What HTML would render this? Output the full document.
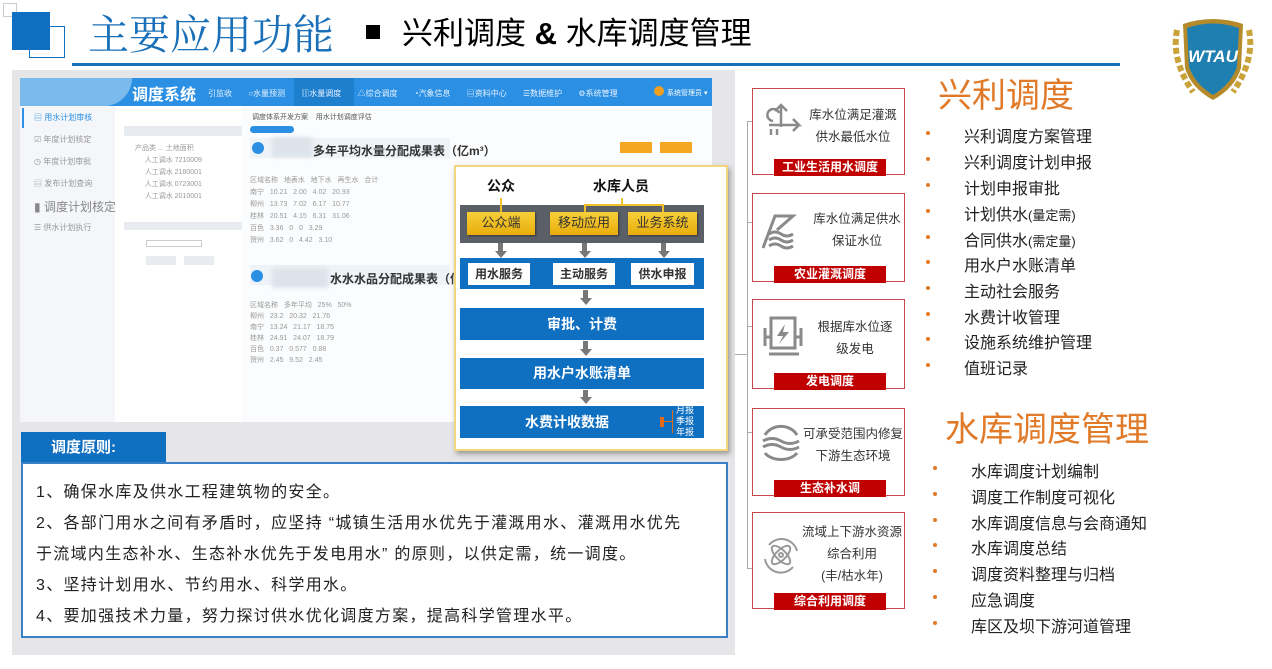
<!DOCTYPE html>
<html><head><meta charset="utf-8">
<style>
*{margin:0;padding:0;box-sizing:border-box}
body{width:1272px;height:669px;background:#fff;position:relative;overflow:hidden;font-family:"Liberation Sans","Noto Sans CJK SC",sans-serif}
.a{position:absolute}
.t{font-family:"Liberation Sans","Noto Sans CJK SC",sans-serif;white-space:nowrap}
.small{font-size:7px;color:#999}
.card{position:absolute;left:752px;width:153px;border:1.5px solid #c9464c;background:#fff}
.card .lab{position:absolute;left:21px;width:112px;height:17px;background:#c00000;color:#fff;font-weight:bold;font-size:12px;text-align:center;line-height:17px;bottom:-2px}
.card .txt{position:absolute;font-size:12.5px;color:#333;text-align:center;line-height:22px}
.li{position:absolute;font-size:16px;color:#222;white-space:nowrap}
.bu{position:absolute;width:4px;height:4px;border-radius:50%;background:#e07a28}
.fb{position:absolute;background:#0f6fc0;color:#fff;font-weight:bold;text-align:center}
.yb{position:absolute;background:linear-gradient(#f7cf3a,#e9ad0a);color:#333;font-size:13px;text-align:center;line-height:22px;box-shadow:1px 1px 2px #333}
.wb{position:absolute;background:#fff;color:#333;font-weight:bold;font-size:12px;text-align:center;line-height:22px}
.arr{position:absolute;width:0;height:0;border-left:6px solid transparent;border-right:6px solid transparent;border-top:7px solid #777}
.arrs{position:absolute;width:5px;background:#777}
</style></head><body>
<!-- title -->
<div class="a" style="left:3px;top:3px;width:14px;height:14px;border:1px solid #ccc"></div>
<div class="a" style="left:29px;top:26px;width:36px;height:32px;border:1px solid #0f6fc0;background:#fff"></div>
<div class="a" style="left:12px;top:12px;width:38px;height:38px;background:#0f6fc0"></div>
<div class="a t" style="left:88px;top:6px;font-size:41px;color:#1a70b8;line-height:52px;font-family:'Noto Serif CJK SC','Liberation Serif',serif">主要应用功能</div>
<div class="a" style="left:366px;top:25px;width:14px;height:14px;background:#000"></div>
<div class="a t" style="left:402px;top:13px;font-size:31px;color:#000;line-height:42px">兴利调度 <b>&amp;</b> 水库调度管理</div>
<div class="a" style="left:72px;top:63px;width:1048px;height:3px;background:#1a70b8"></div>
<!-- logo -->
<svg class="a" style="left:1165px;top:10px" width="96" height="96" viewBox="0 0 96 96">
<path d="M12 20 Q6 50 28 82 M84 20 Q90 50 68 82" stroke="#c9a23a" stroke-width="6" fill="none" stroke-dasharray="6 3"/>
<path d="M18 14 Q48 4 78 14 L76 58 Q70 78 48 90 Q26 78 20 58 Z" fill="#b58a2a"/>
<path d="M22 18 Q48 9 74 18 L72 57 Q66 74 48 85 Q30 74 24 57 Z" fill="#1f7fb0"/>
<text x="48" y="52" text-anchor="middle" font-size="17" font-weight="bold" font-style="italic" fill="#fff" font-family="Liberation Sans">WTAU</text>
</svg>
<!-- gray panel -->
<div class="a" style="left:12px;top:70px;width:723px;height:585px;background:#e6e6e8"></div>
<!-- screenshot -->
<div class="a" style="left:20px;top:78px;width:692px;height:344px;background:#fff"></div>
<div class="a" style="left:20px;top:78px;width:692px;height:28px;background:#2b8fe3"></div>
<div class="a" style="left:20px;top:78px;width:112px;height:28px;background:#8ec4ee;border-radius:0 0 30px 0;opacity:.8"></div>
<div class="a" style="left:294px;top:78px;width:60px;height:28px;background:#1f7fcf"></div>
<div class="a t" style="left:132px;top:81px;font-size:16px;color:#fff;font-weight:bold">调度系统</div>
<div class="a t" style="left:208px;top:88px;font-size:8px;color:#e6f2ff;word-spacing:14px">引监收 ○水量预测 ▥水量调度 △综合调度 ◔汽象信息 ▤资料中心 ☰数据维护 ⚙系统管理</div>
<div class="a" style="left:654px;top:86px;width:10px;height:10px;border-radius:50%;background:#f0a020"></div>
<div class="a t" style="left:667px;top:88px;font-size:7px;color:#fff">系统管理员 ▾</div>
<div class="a" style="left:20px;top:106px;width:95px;height:316px;background:#f4f6f9"></div>
<div class="a" style="left:22px;top:108px;width:2px;height:20px;background:#2b8fe3"></div>
<div class="a t" style="left:34px;top:112px;font-size:8px;color:#2b8fe3">▤ 用水计划审核</div>
<div class="a t" style="left:34px;top:134px;font-size:8px;color:#999">☑ 年度计划核定</div>
<div class="a t" style="left:34px;top:156px;font-size:8px;color:#999">◷ 年度计划审批</div>
<div class="a t" style="left:34px;top:178px;font-size:8px;color:#999">▤ 发布计划查询</div>
<div class="a t" style="left:34px;top:198px;font-size:12px;color:#888">▮ 调度计划核定</div>
<div class="a t" style="left:34px;top:222px;font-size:8px;color:#999">☰ 供水计划执行</div>
<div class="a" style="left:124px;top:126px;width:118px;height:10px;background:#e8ebef"></div>
<div class="a small" style="left:135px;top:143px;line-height:12px;width:100px">产品类 ... 土地面积<br>&nbsp;&nbsp;&nbsp;&nbsp;&nbsp;人工调水 7210009<br>&nbsp;&nbsp;&nbsp;&nbsp;&nbsp;人工调水 2180001<br>&nbsp;&nbsp;&nbsp;&nbsp;&nbsp;人工调水 0723001<br>&nbsp;&nbsp;&nbsp;&nbsp;&nbsp;人工调水 2010001</div>
<div class="a" style="left:124px;top:222px;width:118px;height:8px;background:#e8ebef"></div>
<div class="a" style="left:146px;top:240px;width:56px;height:7px;border:1px solid #ccc"></div>
<div class="a" style="left:146px;top:256px;width:30px;height:9px;background:#e8ebef"></div>
<div class="a" style="left:184px;top:256px;width:30px;height:9px;background:#e8ebef"></div>
<div class="a" style="left:242px;top:106px;width:470px;height:316px;background:#fbfcfd"></div>
<div class="a t" style="left:252px;top:112px;font-size:7px;color:#555">调度体系开发方案 &nbsp;&nbsp;&nbsp;用水计划调度评估</div>
<div class="a" style="left:250px;top:126px;width:44px;height:7px;border-radius:4px;background:#2b8fe3"></div>
<div class="a" style="left:250px;top:138px;width:200px;height:20px;background:#eef3f8"></div>
<div class="a" style="left:252px;top:142px;width:12px;height:12px;border-radius:50%;background:#2b8fe3"></div>
<div class="a" style="left:272px;top:137px;width:40px;height:20px;background:#dde3ea;filter:blur(2px)"></div>
<div class="a t" style="left:313px;top:142px;font-size:12px;color:#333;font-weight:bold">多年平均水量分配成果表（亿m³）</div>
<div class="a" style="left:620px;top:142px;width:32px;height:11px;background:#f5a623"></div>
<div class="a" style="left:660px;top:142px;width:32px;height:11px;background:#f5a623"></div>
<div class="a small" style="left:250px;top:175px;line-height:12px;width:205px">区域名称 &nbsp; 地表水 &nbsp; 地下水 &nbsp; 再生水 &nbsp; 合计<br>南宁 &nbsp; 10.21 &nbsp; 2.00 &nbsp; 4.02 &nbsp; 20.93<br>柳州 &nbsp; 13.73 &nbsp; 7.02 &nbsp; 6.17 &nbsp; 10.77<br>桂林 &nbsp; 20.51 &nbsp; 4.15 &nbsp; 6.31 &nbsp; 31.06<br>百色 &nbsp; 3.36 &nbsp; 0 &nbsp; 0 &nbsp; 3.29<br>贺州 &nbsp; 3.62 &nbsp; 0 &nbsp; 4.42 &nbsp; 3.10</div>
<div class="a" style="left:250px;top:265px;width:200px;height:20px;background:#eef3f8"></div>
<div class="a" style="left:251px;top:270px;width:12px;height:12px;border-radius:50%;background:#2b8fe3"></div>
<div class="a" style="left:272px;top:268px;width:56px;height:20px;background:#dde3ea;filter:blur(2px)"></div>
<div class="a t" style="left:330px;top:270px;font-size:12px;color:#333;font-weight:bold">水水水品分配成果表（亿m³）</div>
<div class="a small" style="left:250px;top:300px;line-height:11px;width:205px">区域名称 &nbsp; 多年平均 &nbsp; 25% &nbsp; 50%<br>柳州 &nbsp; 23.2 &nbsp; 20.32 &nbsp; 21.76<br>南宁 &nbsp; 13.24 &nbsp; 21.17 &nbsp; 18.75<br>桂林 &nbsp; 24.91 &nbsp; 24.07 &nbsp; 18.79<br>百色 &nbsp; 0.37 &nbsp; 0.577 &nbsp; 0.88<br>贺州 &nbsp; 2.45 &nbsp; 9.52 &nbsp; 2.45</div>
<!-- flow box -->
<div class="a" style="left:454px;top:165px;width:274px;height:286px;background:#fff;border:2px solid #f1d77a;box-shadow:2px 3px 5px #999"></div>
<div class="a t" style="left:487px;top:176px;font-size:14px;font-weight:bold;color:#111">公众</div>
<div class="a t" style="left:593px;top:176px;font-size:14px;font-weight:bold;color:#111">水库人员</div>
<div class="a" style="left:460px;top:205px;width:244px;height:38px;background:#5b6068"></div>
<div class="a" style="left:500px;top:198px;width:2px;height:14px;background:#f1c22a"></div>
<div class="a" style="left:621px;top:198px;width:2px;height:7px;background:#f1c22a"></div>
<div class="a" style="left:584px;top:204px;width:2px;height:10px;background:#f1c22a"></div>
<div class="a" style="left:662px;top:204px;width:2px;height:10px;background:#f1c22a"></div>
<div class="a" style="left:584px;top:204px;width:80px;height:2px;background:#f1c22a"></div>
<div class="yb" style="left:467px;top:212px;width:68px;height:23px">公众端</div>
<div class="yb" style="left:550px;top:212px;width:68px;height:23px">移动应用</div>
<div class="yb" style="left:628px;top:212px;width:69px;height:23px">业务系统</div>
<div class="arrs" style="left:498px;top:243px;height:8px"></div><div class="arr" style="left:495px;top:251px"></div>
<div class="arrs" style="left:582px;top:243px;height:8px"></div><div class="arr" style="left:579px;top:251px"></div>
<div class="arrs" style="left:661px;top:243px;height:8px"></div><div class="arr" style="left:658px;top:251px"></div>
<div class="fb" style="left:460px;top:258px;width:244px;height:31px"></div>
<div class="wb" style="left:468px;top:263px;width:62px;height:22px">用水服务</div>
<div class="wb" style="left:553px;top:263px;width:62px;height:22px">主动服务</div>
<div class="wb" style="left:631px;top:263px;width:63px;height:22px">供水申报</div>
<div class="arrs" style="left:583px;top:290px;height:8px"></div><div class="arr" style="left:580px;top:298px"></div>
<div class="fb" style="left:460px;top:308px;width:244px;height:32px;line-height:32px;font-size:14px">审批、计费</div>
<div class="arrs" style="left:583px;top:341px;height:8px"></div><div class="arr" style="left:580px;top:349px"></div>
<div class="fb" style="left:460px;top:358px;width:244px;height:31px;line-height:31px;font-size:14px">用水户水账清单</div>
<div class="arrs" style="left:583px;top:390px;height:8px"></div><div class="arr" style="left:580px;top:397px"></div>
<div class="fb" style="left:460px;top:406px;width:244px;height:32px;line-height:32px;font-size:14px;padding-right:30px">水费计收数据</div>
<div class="a" style="left:660px;top:417px;width:4px;height:10px;background:#e06a1a"></div>
<div class="a" style="left:664px;top:421px;width:8px;height:1px;background:#e06a1a"></div>
<div class="a" style="left:672px;top:410px;width:1px;height:23px;background:#e06a1a"></div>
<div class="a t" style="left:676px;top:405px;font-size:9px;line-height:11px;color:#fff">月报<br>季报<br>年报</div>
<!-- principles -->
<div class="a" style="left:21px;top:432px;width:145px;height:31px;background:#0f6fc0;color:#fff;font-size:15px;font-weight:bold;line-height:31px;padding-left:30px">调度原则:</div>
<div class="a" style="left:21px;top:462px;width:707px;height:176px;background:#fff;border:2px solid #3a80c4"></div>
<div class="a t" style="left:36px;top:477px;font-size:16px;letter-spacing:1.3px;color:#222;line-height:31px">1、确保水库及供水工程建筑物的安全。<br>2、各部门用水之间有矛盾时，应坚持 “城镇生活用水优先于灌溉用水、灌溉用水优先<br>于流域内生态补水、生态补水优先于发电用水” 的原则，以供定需，统一调度。<br>3、坚持计划用水、节约用水、科学用水。<br>4、要加强技术力量，努力探讨供水优化调度方案，提高科学管理水平。</div>
<!-- connector lines -->
<div class="a" style="left:747px;top:121px;width:1px;height:448px;background:#aaa"></div>
<div class="a" style="left:735px;top:354px;width:13px;height:1px;background:#aaa"></div>
<div class="a" style="left:747px;top:121px;width:10px;height:1px;background:#aaa"></div>
<div class="a" style="left:747px;top:222px;width:10px;height:1px;background:#aaa"></div>
<div class="a" style="left:747px;top:326px;width:10px;height:1px;background:#aaa"></div>
<div class="a" style="left:747px;top:432px;width:10px;height:1px;background:#aaa"></div>
<div class="a" style="left:747px;top:568px;width:10px;height:1px;background:#aaa"></div>
<!-- cards -->
<div class="card" style="top:88px;height:87px">
<svg class="a" style="left:6px;top:8px" width="48" height="42" viewBox="0 0 48 42"><g stroke="#8a8a8a" stroke-width="2.5" fill="none"><path d="M14 24 a6 6 0 1 1 6-8 M22 8 L22 30 M16 14 L22 8 L28 14 M10 28 L40 28 L34 22 M40 28 L34 34 M12 32 v6 M18 32 v6"/></g></svg>
<div class="txt" style="left:50px;top:15px;width:100px">库水位满足灌溉<br>供水最低水位</div>
<div class="lab">工业生活用水调度</div></div>
<div class="card" style="top:193px;height:89px">
<svg class="a" style="left:6px;top:14px" width="44" height="44" viewBox="0 0 44 44"><g stroke="#8a8a8a" stroke-width="3" fill="none"><path d="M4 40 L16 8 L34 8 L18 22 M10 26 q6-4 12 0 t12 0 M10 32 q6-4 12 0 t12 0 M10 38 q6-4 12 0 t12 0"/></g></svg>
<div class="txt" style="left:56px;top:14px;width:96px">库水位满足供水<br>保证水位</div>
<div class="lab">农业灌溉调度</div></div>
<div class="card" style="top:299px;height:90px">
<svg class="a" style="left:8px;top:14px" width="44" height="44" viewBox="0 0 44 44"><g stroke="#8a8a8a" stroke-width="3" fill="none"><rect x="10" y="4" width="24" height="30"/><path d="M4 14 v18 M40 14 v18 M4 23 h6 M34 23 h6 M8 40 h30"/></g><path d="M24 10 L16 22 L22 22 L18 30 L28 18 L22 18 Z" fill="#8a8a8a"/></svg>
<div class="txt" style="left:62px;top:16px;width:80px">根据库水位逐<br>级发电</div>
<div class="lab">发电调度</div></div>
<div class="card" style="top:408px;height:88px">
<svg class="a" style="left:4px;top:12px" width="48" height="44" viewBox="0 0 48 44"><g stroke="#8a8a8a" stroke-width="3" fill="none"><path d="M8 14 a18 16 0 0 1 32 0 M6 20 q9-5 18 0 t18 0 M6 26 q9-5 18 0 t18 0 M8 32 a18 12 0 0 0 32 0"/></g></svg>
<div class="txt" style="left:48px;top:14px;width:104px">可承受范围内修复<br>下游生态环境</div>
<div class="lab">生态补水调</div></div>
<div class="card" style="top:512px;height:97px">
<svg class="a" style="left:8px;top:22px" width="40" height="40" viewBox="0 0 40 40"><g stroke="#999" stroke-width="2" fill="none"><path d="M8 10 a16 16 0 0 1 28 6 M32 32 a16 16 0 0 1 -28 -8"/><ellipse cx="20" cy="20" rx="12" ry="5" transform="rotate(45 20 20)"/><ellipse cx="20" cy="20" rx="12" ry="5" transform="rotate(-45 20 20)"/><circle cx="20" cy="20" r="2"/></g></svg>
<div class="txt" style="left:46px;top:8px;width:106px">流域上下游水资源<br>综合利用<br>(丰/枯水年)</div>
<div class="lab">综合利用调度</div></div>
<!-- right lists -->
<div class="a t" style="left:938px;top:74px;font-size:34px;color:#e07a28;line-height:44px">兴利调度</div>
<div class="a t" style="left:945px;top:408px;font-size:34px;color:#e07a28;line-height:44px">水库调度管理</div>
<div class="bu" style="left:926px;top:131px"></div><div class="li" style="left:964px;top:123px">兴利调度方案管理</div>
<div class="bu" style="left:926px;top:157px"></div><div class="li" style="left:964px;top:149px">兴利调度计划申报</div>
<div class="bu" style="left:926px;top:183px"></div><div class="li" style="left:964px;top:175px">计划申报审批</div>
<div class="bu" style="left:926px;top:209px"></div><div class="li" style="left:964px;top:201px">计划供水<span style="font-size:13px">(量定需)</span></div>
<div class="bu" style="left:926px;top:235px"></div><div class="li" style="left:964px;top:227px">合同供水<span style="font-size:13px">(需定量)</span></div>
<div class="bu" style="left:926px;top:260px"></div><div class="li" style="left:964px;top:252px">用水户水账清单</div>
<div class="bu" style="left:926px;top:286px"></div><div class="li" style="left:964px;top:278px">主动社会服务</div>
<div class="bu" style="left:926px;top:312px"></div><div class="li" style="left:964px;top:304px">水费计收管理</div>
<div class="bu" style="left:926px;top:337px"></div><div class="li" style="left:964px;top:329px">设施系统维护管理</div>
<div class="bu" style="left:926px;top:363px"></div><div class="li" style="left:964px;top:355px">值班记录</div>
<div class="bu" style="left:933px;top:466px"></div><div class="li" style="left:971px;top:458px">水库调度计划编制</div>
<div class="bu" style="left:933px;top:492px"></div><div class="li" style="left:971px;top:484px">调度工作制度可视化</div>
<div class="bu" style="left:933px;top:518px"></div><div class="li" style="left:971px;top:510px">水库调度信息与会商通知</div>
<div class="bu" style="left:933px;top:543px"></div><div class="li" style="left:971px;top:535px">水库调度总结</div>
<div class="bu" style="left:933px;top:569px"></div><div class="li" style="left:971px;top:561px">调度资料整理与归档</div>
<div class="bu" style="left:933px;top:595px"></div><div class="li" style="left:971px;top:587px">应急调度</div>
<div class="bu" style="left:933px;top:621px"></div><div class="li" style="left:971px;top:613px">库区及坝下游河道管理</div>
</body></html>
